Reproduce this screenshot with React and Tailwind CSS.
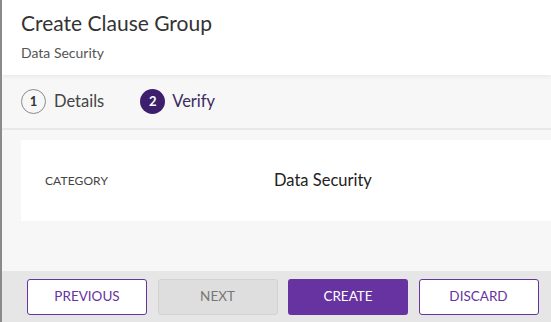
export default function App() {
  return (
    <div className="w-[551px] h-[322px] flex flex-col border-l-2 border-[#8a8a8a] bg-[#f7f7f7] overflow-hidden font-['Lato',sans-serif]">
      <div className="h-[75px] bg-white pl-[19px] pt-[9px] shadow-[0_2px_4px_rgba(0,0,0,0.06)] relative z-10 shrink-0">
        <div className="text-[21px] leading-[28px] text-[#333333]">Create Clause Group</div>
        <div className="text-[14px] leading-[18px] mt-[7px] text-[#555555]">Data Security</div>
      </div>
      <div className="h-[55px] shrink-0 flex items-center pl-[19px] border-b-2 border-[#e8e8e8]">
        <div className="flex items-center">
          <div className="w-[25px] h-[25px] rounded-full border border-[#8a8a8a] flex items-center justify-center text-[13px] font-bold text-[#333]">1</div>
          <span className="ml-[8px] text-[16.5px] text-[#444]">Details</span>
        </div>
        <div className="flex items-center ml-[36px]">
          <div className="w-[25px] h-[25px] rounded-full bg-[#3d1f6e] flex items-center justify-center text-[13px] font-bold text-white">2</div>
          <span className="ml-[7px] text-[16.5px] text-[#3d2a63]">Verify</span>
        </div>
      </div>
      <div className="flex-1 pt-[10px] pl-[19px]">
        <div className="h-[81px] bg-white flex items-center">
          <div className="w-[253px] pl-[24px] text-[12px] text-[#444] tracking-[0.1px]">CATEGORY</div>
          <div className="text-[16.5px] text-[#222]">Data Security</div>
        </div>
      </div>
      <div className="h-[51px] shrink-0 bg-[#e6e6e6] flex items-center pl-[25px] gap-[10.5px]">
        <button className="w-[120px] h-[36px] rounded-[3px] border border-[#6633a0] bg-white text-[#6633a0] text-[13.5px]">PREVIOUS</button>
        <button className="w-[120px] h-[36px] rounded-[3px] border border-[#d2d2d2] bg-[#dedede] text-[#777] text-[13.5px]">NEXT</button>
        <button className="w-[120px] h-[36px] rounded-[3px] bg-[#6633a0] text-white text-[13.5px]">CREATE</button>
        <button className="w-[120px] h-[36px] rounded-[3px] border border-[#6633a0] bg-white text-[#6633a0] text-[13.5px]">DISCARD</button>
      </div>
    </div>
  );
}
